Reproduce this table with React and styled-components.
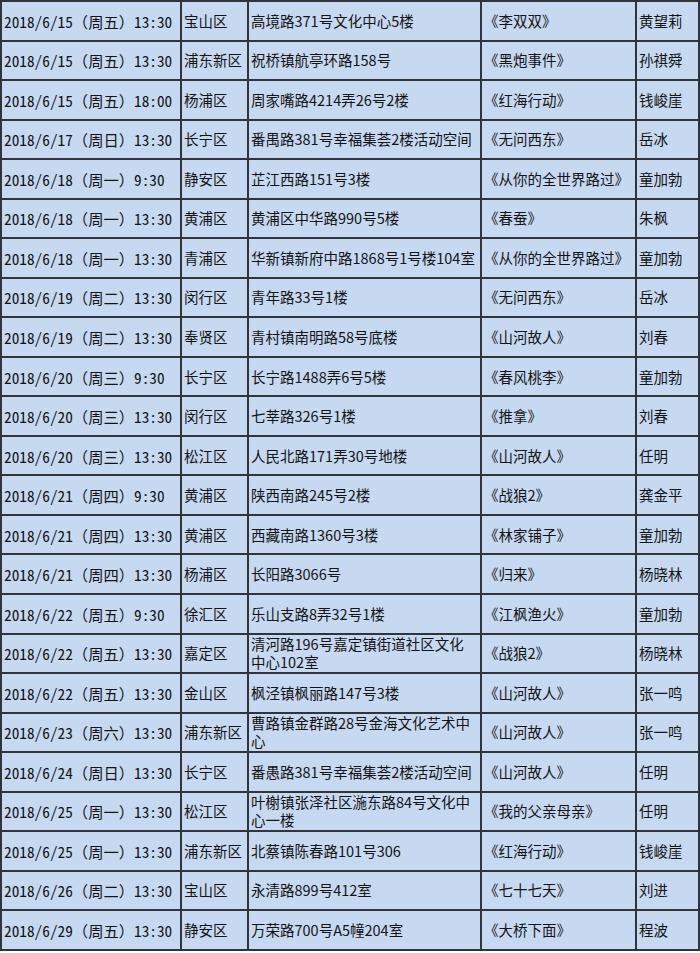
import React from 'react'
import styled, { createGlobalStyle } from 'styled-components'

const GlobalStyle = createGlobalStyle`
  html, body {
    margin: 0;
    padding: 0;
    background: #fff;
  }
`

const Table = styled.table`
  border-collapse: collapse;
  table-layout: fixed;
  width: 698px;
  height: 950px;
  background: #c6d9f1;
  color: #141414;
  font-family: "Noto Sans CJK SC", "Noto Sans", sans-serif;
  font-size: 14.5px;
`

const Row = styled.tr`
  height: 39.54px;
`

const Cell = styled.td`
  border: 2px solid #30343b;
  padding: 0 0 0 2px;
  vertical-align: middle;
  white-space: pre;
  overflow: hidden;
  line-height: 18px;
  font-family: ${(p) =>
    p.$mono
      ? '"Noto Sans Mono CJK SC", "Noto Sans CJK SC", monospace'
      : '"Noto Sans CJK SC", "Noto Sans", sans-serif'};
  font-size: ${(p) => (p.$mono ? '15.3px' : '14.5px')};
`

const widths = [180, 67, 233, 155, 63]

const rows = [
  ['2018/6/15（周五）13:30', '宝山区', '高境路371号文化中心5楼', '《李双双》', '黄望莉'],
  ['2018/6/15（周五）13:30', '浦东新区', '祝桥镇航亭环路158号', '《黑炮事件》', '孙祺舜'],
  ['2018/6/15（周五）18:00', '杨浦区', '周家嘴路4214弄26号2楼', '《红海行动》', '钱峻崖'],
  ['2018/6/17（周日）13:30', '长宁区', '番禺路381号幸福集荟2楼活动空间', '《无问西东》', '岳冰'],
  ['2018/6/18（周一）9:30', '静安区', '芷江西路151号3楼', '《从你的全世界路过》', '童加勃'],
  ['2018/6/18（周一）13:30', '黄浦区', '黄浦区中华路990号5楼', '《春蚕》', '朱枫'],
  ['2018/6/18（周一）13:30', '青浦区', '华新镇新府中路1868号1号楼104室', '《从你的全世界路过》', '童加勃'],
  ['2018/6/19（周二）13:30', '闵行区', '青年路33号1楼', '《无问西东》', '岳冰'],
  ['2018/6/19（周二）13:30', '奉贤区', '青村镇南明路58号底楼', '《山河故人》', '刘春'],
  ['2018/6/20（周三）9:30', '长宁区', '长宁路1488弄6号5楼', '《春风桃李》', '童加勃'],
  ['2018/6/20（周三）13:30', '闵行区', '七莘路326号1楼', '《推拿》', '刘春'],
  ['2018/6/20（周三）13:30', '松江区', '人民北路171弄30号地楼', '《山河故人》', '任明'],
  ['2018/6/21（周四）9:30', '黄浦区', '陕西南路245号2楼', '《战狼2》', '龚金平'],
  ['2018/6/21（周四）13:30', '黄浦区', '西藏南路1360号3楼', '《林家铺子》', '童加勃'],
  ['2018/6/21（周四）13:30', '杨浦区', '长阳路3066号', '《归来》', '杨晓林'],
  ['2018/6/22（周五）9:30', '徐汇区', '乐山支路8弄32号1楼', '《江枫渔火》', '童加勃'],
  ['2018/6/22（周五）13:30', '嘉定区', '清河路196号嘉定镇街道社区文化\n中心102室', '《战狼2》', '杨晓林'],
  ['2018/6/22（周五）13:30', '金山区', '枫泾镇枫丽路147号3楼', '《山河故人》', '张一鸣'],
  ['2018/6/23（周六）13:30', '浦东新区', '曹路镇金群路28号金海文化艺术中\n心', '《山河故人》', '张一鸣'],
  ['2018/6/24（周日）13:30', '长宁区', '番愚路381号幸福集荟2楼活动空间', '《山河故人》', '任明'],
  ['2018/6/25（周一）13:30', '松江区', '叶榭镇张泽社区湤东路84号文化中\n心一楼', '《我的父亲母亲》', '任明'],
  ['2018/6/25（周一）13:30', '浦东新区', '北蔡镇陈春路101号306', '《红海行动》', '钱峻崖'],
  ['2018/6/26（周二）13:30', '宝山区', '永清路899号412室', '《七十七天》', '刘进'],
  ['2018/6/29（周五）13:30', '静安区', '万荣路700号A5幢204室', '《大桥下面》', '程波'],
]

const App = () => {
  return (
    <>
      <GlobalStyle />
      <Table>
        <colgroup>
          {widths.map((w, i) => (
            <col key={i} style={{ width: w }} />
          ))}
        </colgroup>
        <tbody>
          {rows.map((row, i) => (
            <Row key={i}>
              {row.map((text, j) => (
                <Cell key={j} $mono={j === 0}>
                  {text}
                </Cell>
              ))}
            </Row>
          ))}
        </tbody>
      </Table>
    </>
  )
}

export default App
